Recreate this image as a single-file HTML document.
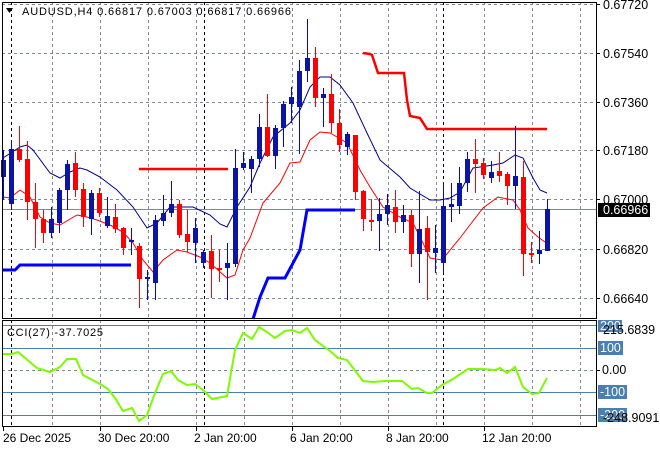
<!DOCTYPE html>
<html><head><meta charset="utf-8"><style>
html,body{margin:0;padding:0;background:#fff;}
svg{display:block;}
text{font-family:"Liberation Sans",sans-serif;font-size:11px;}
.p{font-size:12.5px;}
.t{font-size:12px;}
</style></head><body>
<svg width="660" height="450" viewBox="0 0 660 450" xmlns="http://www.w3.org/2000/svg">
<rect width="660" height="450" fill="#fff"/>
<g stroke="#7d8a99" stroke-width="1" stroke-dasharray="3,3" fill="none" shape-rendering="crispEdges">
<line x1="2" y1="4.5" x2="596" y2="4.5"/>
<line x1="2" y1="53.5" x2="596" y2="53.5"/>
<line x1="2" y1="102.5" x2="596" y2="102.5"/>
<line x1="2" y1="150.5" x2="596" y2="150.5"/>
<line x1="2" y1="199.5" x2="596" y2="199.5"/>
<line x1="2" y1="249.5" x2="596" y2="249.5"/>
<line x1="2" y1="298.5" x2="596" y2="298.5"/>
<line x1="52.5" y1="2" x2="52.5" y2="426"/><line x1="100.5" y1="2" x2="100.5" y2="426"/>
<line x1="148.5" y1="2" x2="148.5" y2="426"/><line x1="196.5" y1="2" x2="196.5" y2="426"/>
<line x1="244.5" y1="2" x2="244.5" y2="426"/><line x1="292.5" y1="2" x2="292.5" y2="426"/>
<line x1="340.5" y1="2" x2="340.5" y2="426"/><line x1="388.5" y1="2" x2="388.5" y2="426"/>
<line x1="436.5" y1="2" x2="436.5" y2="426"/><line x1="484.5" y1="2" x2="484.5" y2="426"/>
<line x1="532.5" y1="2" x2="532.5" y2="426"/><line x1="580.5" y1="2" x2="580.5" y2="426"/>
<line x1="2" y1="370.5" x2="596" y2="370.5"/>
</g>
<g stroke="#000" stroke-width="1" stroke-dasharray="3,3" shape-rendering="crispEdges">
<line x1="11.5" y1="2" x2="11.5" y2="426"/>
<line x1="204.5" y1="2" x2="204.5" y2="426"/>
<line x1="443.5" y1="2" x2="443.5" y2="426"/>
</g>
<line x1="2" y1="209.5" x2="596" y2="209.5" stroke="#7d8a99" shape-rendering="crispEdges"/>
<polyline points="2,270 15,270 20,265 131,265" fill="none" stroke="#0000ff" stroke-width="3"/>
<polyline points="253,319 260,297 268,278 285,278 300,250 307,210 355,210" fill="none" stroke="#0000ff" stroke-width="3"/>
<polyline points="139,169 228,169" fill="none" stroke="#ff0000" stroke-width="2.5"/>
<polyline points="363,53 370,54 372,55 378,73 404,73 407,100 410,116 420,118 427,129 547,129" fill="none" stroke="#ff0000" stroke-width="2.5"/>
<polyline points="3,158 20,147 27,145 33,150 50,173 60,178 70,172 80,168 87,170 100,177 117,190 133,207 147,228 157,223 170,207 193,207 210,215 220,224 227,227 237,207 250,187 260,163 273,137 290,123 300,110 310,87 320,77 330,77 340,85 353,103 367,133 380,160 400,177 410,188 430,200 440,200 450,198 460,192 473,168 480,167 493,165 503,163 515,155 523,158 533,178 540,190 547,193" fill="none" stroke="#00008b" stroke-width="1"/>
<polyline points="3,197 10,198 20,190 30,197 40,217 50,223 60,225 77,215 87,217 97,220 110,225 123,232 133,243 143,260 153,272 163,260 177,250 187,252 200,257 210,263 227,278 235,275 243,250 250,238 263,203 280,183 290,163 300,162 310,140 320,132 330,133 337,137 347,143 360,170 370,187 383,207 400,217 413,223 423,243 430,258 442,260 460,238 483,208 498,197 513,200 520,210 528,228 538,237 545,242" fill="none" stroke="#ff0000" stroke-width="1"/>
<g shape-rendering="crispEdges">
<line x1="3.5" y1="150" x2="3.5" y2="200" stroke="#00f"/><rect x="1" y="160" width="5" height="17" fill="#0a14a6"/>
<line x1="11.5" y1="140" x2="11.5" y2="210" stroke="#00f"/><rect x="9" y="149" width="5" height="55" fill="#0a14a6"/>
<line x1="19.5" y1="126" x2="19.5" y2="162" stroke="#f00"/><rect x="17" y="149" width="5" height="11" fill="#f00"/>
<line x1="27.5" y1="141" x2="27.5" y2="220" stroke="#f00"/><rect x="25" y="159" width="5" height="43" fill="#f00"/>
<line x1="35.5" y1="183" x2="35.5" y2="248" stroke="#f00"/><rect x="33" y="202" width="5" height="17" fill="#f00"/>
<line x1="43.5" y1="210" x2="43.5" y2="243" stroke="#f00"/><rect x="41" y="219" width="5" height="14" fill="#f00"/>
<line x1="51.5" y1="207" x2="51.5" y2="238" stroke="#00f"/><rect x="49" y="219" width="5" height="14" fill="#0a14a6"/>
<line x1="59.5" y1="188" x2="59.5" y2="233" stroke="#00f"/><rect x="57" y="190" width="5" height="33" fill="#0a14a6"/>
<line x1="67.5" y1="160" x2="67.5" y2="210" stroke="#00f"/><rect x="65" y="164" width="5" height="26" fill="#0a14a6"/>
<line x1="75.5" y1="152" x2="75.5" y2="197" stroke="#f00"/><rect x="73" y="163" width="5" height="27" fill="#f00"/>
<line x1="83.5" y1="183" x2="83.5" y2="227" stroke="#f00"/><rect x="81" y="189" width="5" height="28" fill="#f00"/>
<line x1="91.5" y1="190" x2="91.5" y2="235" stroke="#00f"/><rect x="89" y="193" width="5" height="26" fill="#0a14a6"/>
<line x1="99.5" y1="188" x2="99.5" y2="217" stroke="#f00"/><rect x="97" y="193" width="5" height="20" fill="#f00"/>
<line x1="107.5" y1="197" x2="107.5" y2="228" stroke="#00f"/><rect x="105" y="216" width="5" height="10" fill="#0a14a6"/>
<line x1="115.5" y1="204" x2="115.5" y2="233" stroke="#f00"/><rect x="113" y="217" width="5" height="12" fill="#f00"/>
<line x1="123.5" y1="227" x2="123.5" y2="255" stroke="#f00"/><rect x="121" y="228" width="5" height="20" fill="#f00"/>
<line x1="131.5" y1="228" x2="131.5" y2="255" stroke="#00f"/><rect x="129" y="240" width="5" height="2" fill="#0a14a6"/>
<line x1="139.5" y1="243" x2="139.5" y2="308" stroke="#f00"/><rect x="137" y="246" width="5" height="33" fill="#f00"/>
<line x1="147.5" y1="270" x2="147.5" y2="300" stroke="#00f"/><rect x="145" y="277" width="5" height="2" fill="#0a14a6"/>
<line x1="155.5" y1="215" x2="155.5" y2="300" stroke="#00f"/><rect x="153" y="220" width="5" height="63" fill="#0a14a6"/>
<line x1="163.5" y1="195" x2="163.5" y2="226" stroke="#00f"/><rect x="161" y="213" width="5" height="8" fill="#0a14a6"/>
<line x1="171.5" y1="181" x2="171.5" y2="217" stroke="#00f"/><rect x="169" y="204" width="5" height="9" fill="#0a14a6"/>
<line x1="179.5" y1="200" x2="179.5" y2="238" stroke="#f00"/><rect x="177" y="204" width="5" height="31" fill="#f00"/>
<line x1="187.5" y1="210" x2="187.5" y2="252" stroke="#f00"/><rect x="185" y="234" width="5" height="8" fill="#f00"/>
<line x1="195.5" y1="218" x2="195.5" y2="263" stroke="#00f"/><rect x="193" y="228" width="5" height="15" fill="#0a14a6"/>
<line x1="203.5" y1="250" x2="203.5" y2="268" stroke="#00f"/><rect x="201" y="252" width="5" height="11" fill="#0a14a6"/>
<line x1="211.5" y1="235" x2="211.5" y2="298" stroke="#f00"/><rect x="209" y="251" width="5" height="18" fill="#f00"/>
<line x1="219.5" y1="250" x2="219.5" y2="282" stroke="#f00"/><rect x="217" y="268" width="5" height="2" fill="#f00"/>
<line x1="227.5" y1="243" x2="227.5" y2="300" stroke="#00f"/><rect x="225" y="263" width="5" height="5" fill="#0a14a6"/>
<line x1="235.5" y1="149" x2="235.5" y2="267" stroke="#00f"/><rect x="233" y="168" width="5" height="96" fill="#0a14a6"/>
<line x1="243.5" y1="152" x2="243.5" y2="170" stroke="#00f"/><rect x="241" y="163" width="5" height="5" fill="#0a14a6"/>
<line x1="251.5" y1="156" x2="251.5" y2="193" stroke="#00f"/><rect x="249" y="159" width="5" height="10" fill="#0a14a6"/>
<line x1="259.5" y1="114" x2="259.5" y2="167" stroke="#00f"/><rect x="257" y="127" width="5" height="32" fill="#0a14a6"/>
<line x1="267.5" y1="94" x2="267.5" y2="157" stroke="#f00"/><rect x="265" y="127" width="5" height="29" fill="#f00"/>
<line x1="275.5" y1="125" x2="275.5" y2="169" stroke="#00f"/><rect x="273" y="128" width="5" height="28" fill="#0a14a6"/>
<line x1="283.5" y1="101" x2="283.5" y2="147" stroke="#00f"/><rect x="281" y="104" width="5" height="24" fill="#0a14a6"/>
<line x1="291.5" y1="87" x2="291.5" y2="123" stroke="#00f"/><rect x="289" y="97" width="5" height="7" fill="#0a14a6"/>
<line x1="299.5" y1="60" x2="299.5" y2="154" stroke="#00f"/><rect x="297" y="71" width="5" height="36" fill="#0a14a6"/>
<line x1="307.5" y1="19" x2="307.5" y2="82" stroke="#00f"/><rect x="305" y="58" width="5" height="13" fill="#0a14a6"/>
<line x1="315.5" y1="47" x2="315.5" y2="107" stroke="#f00"/><rect x="313" y="58" width="5" height="40" fill="#f00"/>
<line x1="323.5" y1="88" x2="323.5" y2="127" stroke="#00f"/><rect x="321" y="94" width="5" height="4" fill="#0a14a6"/>
<line x1="331.5" y1="74" x2="331.5" y2="133" stroke="#f00"/><rect x="329" y="94" width="5" height="29" fill="#f00"/>
<line x1="339.5" y1="109" x2="339.5" y2="152" stroke="#f00"/><rect x="337" y="123" width="5" height="22" fill="#f00"/>
<line x1="347.5" y1="132" x2="347.5" y2="155" stroke="#00f"/><rect x="345" y="134" width="5" height="13" fill="#0a14a6"/>
<line x1="355.5" y1="135" x2="355.5" y2="200" stroke="#f00"/><rect x="353" y="135" width="5" height="57" fill="#f00"/>
<line x1="363.5" y1="190" x2="363.5" y2="231" stroke="#f00"/><rect x="361" y="191" width="5" height="28" fill="#f00"/>
<line x1="371.5" y1="199" x2="371.5" y2="231" stroke="#f00"/><rect x="369" y="220" width="5" height="2" fill="#f00"/>
<line x1="379.5" y1="198" x2="379.5" y2="251" stroke="#00f"/><rect x="377" y="214" width="5" height="7" fill="#0a14a6"/>
<line x1="387.5" y1="194" x2="387.5" y2="225" stroke="#00f"/><rect x="385" y="205" width="5" height="9" fill="#0a14a6"/>
<line x1="395.5" y1="190" x2="395.5" y2="233" stroke="#f00"/><rect x="393" y="207" width="5" height="15" fill="#f00"/>
<line x1="403.5" y1="205" x2="403.5" y2="233" stroke="#00f"/><rect x="401" y="215" width="5" height="7" fill="#0a14a6"/>
<line x1="411.5" y1="210" x2="411.5" y2="267" stroke="#f00"/><rect x="409" y="215" width="5" height="39" fill="#f00"/>
<line x1="419.5" y1="191" x2="419.5" y2="283" stroke="#00f"/><rect x="417" y="229" width="5" height="25" fill="#0a14a6"/>
<line x1="427.5" y1="216" x2="427.5" y2="300" stroke="#f00"/><rect x="425" y="228" width="5" height="24" fill="#f00"/>
<line x1="435.5" y1="225" x2="435.5" y2="273" stroke="#00f"/><rect x="433" y="248" width="5" height="5" fill="#0a14a6"/>
<line x1="443.5" y1="182" x2="443.5" y2="273" stroke="#00f"/><rect x="441" y="206" width="5" height="57" fill="#0a14a6"/>
<line x1="451.5" y1="183" x2="451.5" y2="222" stroke="#00f"/><rect x="449" y="204" width="5" height="3" fill="#0a14a6"/>
<line x1="459.5" y1="167" x2="459.5" y2="214" stroke="#00f"/><rect x="457" y="183" width="5" height="23" fill="#0a14a6"/>
<line x1="467.5" y1="152" x2="467.5" y2="192" stroke="#00f"/><rect x="465" y="159" width="5" height="24" fill="#0a14a6"/>
<line x1="475.5" y1="139" x2="475.5" y2="193" stroke="#f00"/><rect x="473" y="159" width="5" height="5" fill="#f00"/>
<line x1="483.5" y1="158" x2="483.5" y2="179" stroke="#f00"/><rect x="481" y="163" width="5" height="12" fill="#f00"/>
<line x1="491.5" y1="161" x2="491.5" y2="183" stroke="#00f"/><rect x="489" y="172" width="5" height="6" fill="#0a14a6"/>
<line x1="499.5" y1="152" x2="499.5" y2="182" stroke="#f00"/><rect x="497" y="171" width="5" height="5" fill="#f00"/>
<line x1="507.5" y1="172" x2="507.5" y2="205" stroke="#f00"/><rect x="505" y="174" width="5" height="12" fill="#f00"/>
<line x1="515.5" y1="126" x2="515.5" y2="209" stroke="#00f"/><rect x="513" y="176" width="5" height="10" fill="#0a14a6"/>
<line x1="523.5" y1="161" x2="523.5" y2="276" stroke="#f00"/><rect x="521" y="177" width="5" height="77" fill="#f00"/>
<line x1="531.5" y1="242" x2="531.5" y2="263" stroke="#f00"/><rect x="529" y="253" width="5" height="2" fill="#f00"/>
<line x1="539.5" y1="231" x2="539.5" y2="264" stroke="#00f"/><rect x="537" y="250" width="5" height="4" fill="#0a14a6"/>
<line x1="547.5" y1="199" x2="547.5" y2="251" stroke="#00f"/><rect x="545" y="209" width="5" height="42" fill="#0a14a6"/>
</g>
<g stroke="#4a7fb0" stroke-width="1" shape-rendering="crispEdges">
<line x1="2" y1="325.5" x2="596" y2="325.5"/>
<line x1="2" y1="348.5" x2="596" y2="348.5"/>
<line x1="2" y1="392.5" x2="596" y2="392.5"/>
<line x1="2" y1="415.5" x2="596" y2="415.5"/>
</g>
<polyline points="3,354 12,354 18,352 37,368 50,372 60,367 67,359 76,359 83,375 100,384 108,389 115,398 123,411 132,408 139,421 147,415 155,393 163,374 171,371 178,380 187,385 195,384 203,390 212,399 227,396 235,350 243,333 252,339 259,327 267,332 275,338 285,331 292,330 300,333 307,328 315,340 330,351 338,358 347,360 363,381 373,382 385,381 402,381 412,389 418,388 427,393 432,393 442,385 453,379 468,369 482,369 495,370 500,368 507,373 515,367 523,387 532,394 539,393 547,378" fill="none" stroke="#7cfc00" stroke-width="2"/>
<g fill="none" stroke="#000" stroke-width="1" shape-rendering="crispEdges">
<rect x="2.5" y="2.5" width="594" height="316"/>
<rect x="2.5" y="320.5" width="594" height="106"/>
</g>
<g stroke="#000" shape-rendering="crispEdges">
<line x1="597" y1="4.5" x2="600" y2="4.5"/><line x1="597" y1="53.5" x2="600" y2="53.5"/>
<line x1="597" y1="102.5" x2="600" y2="102.5"/><line x1="597" y1="150.5" x2="600" y2="150.5"/>
<line x1="597" y1="199.5" x2="600" y2="199.5"/><line x1="597" y1="249.5" x2="600" y2="249.5"/>
<line x1="597" y1="298.5" x2="600" y2="298.5"/><line x1="597" y1="370.5" x2="600" y2="370.5"/>
<line x1="3.5" y1="427" x2="3.5" y2="431"/><line x1="100.5" y1="427" x2="100.5" y2="431"/>
<line x1="196.5" y1="427" x2="196.5" y2="431"/><line x1="292.5" y1="427" x2="292.5" y2="431"/>
<line x1="388.5" y1="427" x2="388.5" y2="431"/><line x1="484.5" y1="427" x2="484.5" y2="431"/>
</g>
<path d="M6,8 L13,8 L9.5,13 Z" fill="#000"/>
<text x="22" y="15" fill="#000" textLength="269" lengthAdjust="spacing">AUDUSD,H4  0.66817 0.67003 0.66817 0.66966</text>
<text x="7" y="336" fill="#000" textLength="96" lengthAdjust="spacing">CCI(27) -37.7025</text>
<g fill="#000" class="p">
<text x="603" y="9" class="p">0.67720</text>
<text x="603" y="58" class="p">0.67540</text>
<text x="603" y="107" class="p">0.67360</text>
<text x="603" y="155" class="p">0.67180</text>
<text x="603" y="204" class="p">0.67000</text>
<text x="603" y="254" class="p">0.66820</text>
<text x="603" y="303" class="p">0.66640</text>
</g>
<rect x="598" y="203" width="52" height="14" fill="#000"/>
<text x="603" y="214" fill="#fff" class="p">0.66966</text>
<rect x="598" y="320" width="24" height="12" fill="#4a7fb0"/>
<text x="600" y="330" fill="#fff" class="p">200</text>
<text x="603" y="334" fill="#000" class="p">215.6839</text>
<rect x="598" y="341" width="25" height="14" fill="#4a7fb0"/>
<text x="600" y="352" fill="#fff" class="p">100</text>
<text x="602" y="374" fill="#000" class="p">0.00</text>
<rect x="598" y="385" width="29" height="14" fill="#4a7fb0"/>
<text x="600" y="396" fill="#fff" class="p">-100</text>
<rect x="598" y="408" width="29" height="14" fill="#4a7fb0"/>
<text x="600" y="419" fill="#fff" class="p">-200</text>
<text x="603" y="422" fill="#000" class="p">-248.9091</text>
<g fill="#000">
<text x="3" y="442" class="t">26 Dec 2025</text>
<text x="98" y="442" class="t">30 Dec 20:00</text>
<text x="194" y="442" class="t">2 Jan 20:00</text>
<text x="290" y="442" class="t">6 Jan 20:00</text>
<text x="386" y="442" class="t">8 Jan 20:00</text>
<text x="482" y="442" class="t">12 Jan 20:00</text>
</g>
</svg>
</body></html>
